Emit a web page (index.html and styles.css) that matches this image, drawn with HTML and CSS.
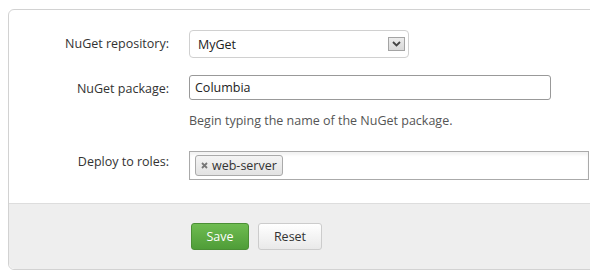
FILE: index.html
```html
<!DOCTYPE html>
<html lang="en">
<head>
  <meta charset="UTF-8" />
  <title>NuGet step</title>
  <link rel="stylesheet" href="styles.css">
</head>
<body>
  <div class="card">
    <div class="fields">
      <label class="label">NuGet repository:</label>
      <div class="select">
        <span class="select-value">MyGet</span>
        <span class="select-arrow">
          <svg width="9" height="6" viewBox="0 0 9 6"><path d="M1 1 L4.5 4.5 L8 1" fill="none" stroke="#444" stroke-width="1.8"/></svg>
        </span>
      </div>

      <label class="label">NuGet package:</label>
      <div class="control">
        <input class="text" type="text" value="Columbia">
        <div class="help">Begin typing the name of the NuGet package.</div>
      </div>

      <label class="label label-roles">Deploy to roles:</label>
      <div class="tags">
        <span class="tag">
          <svg width="7" height="7" viewBox="0 0 7 7"><path d="M1 1 L6 6 M6 1 L1 6" stroke="#777" stroke-width="1.8"/></svg>
          web-server
        </span>
      </div>
    </div>
    <div class="footer">
      <button class="btn btn-save">Save</button>
      <button class="btn btn-reset">Reset</button>
    </div>
  </div>
</body>
</html>
```

FILE: styles.css
```css
body {
  margin: 0;
  padding: 9px 0 0 8px;
  overflow: hidden;
  background: #fff;
  font-family: 'Open Sans', sans-serif;
  font-size: 12.5px;
  color: #333;
}
.card {
  width: 600px;
  border: 1px solid #d2d2d2;
  border-radius: 6px;
  background: #fff;
}
.fields {
  display: grid;
  grid-template-columns: 160px auto;
  column-gap: 20px;
  row-gap: 17px;
  padding: 20px 0 23px;
  align-items: start;
}
.label {
  text-align: right;
  line-height: 28px;
  color: #333;
}
.label-roles {
  line-height: 22px;
}
.select {
  width: 220px;
  height: 28px;
  box-sizing: border-box;
  border: 1px solid #d0d0d0;
  border-radius: 4px;
  display: flex;
  align-items: center;
  justify-content: space-between;
  padding: 0 3px 0 8px;
  color: #222;
}
.select-arrow {
  width: 15px;
  height: 12px;
  border: 1px solid #a4a4a4;
  background: linear-gradient(#ececec, #d9d9d9);
  display: flex;
  align-items: center;
  justify-content: center;
}
.control {
  display: flex;
  flex-direction: column;
}
.text {
  width: 362px;
  height: 25px;
  box-sizing: border-box;
  border: 1px solid #999;
  border-radius: 3px;
  padding: 0 5px;
  font-family: inherit;
  font-size: 12.5px;
  color: #222;
}
.help {
  margin-top: 12px;
  margin-bottom: 5px;
  color: #555;
  line-height: 17px;
}
.tags {
  width: 400px;
  height: 29px;
  box-sizing: border-box;
  border: 1px solid #aaa;
  box-shadow: inset 0 3px 3px rgba(0,0,0,0.05);
  padding: 3px 5px;
}
.tag {
  display: inline-flex;
  align-items: center;
  gap: 4px;
  height: 21px;
  box-sizing: border-box;
  padding: 0 5px;
  border: 1px solid #aaa;
  border-radius: 3px;
  background: linear-gradient(#f4f4f4, #e2e2e2);
  color: #333;
}
.footer {
  background: #eee;
  border-top: 1px solid #ddd;
  border-radius: 0 0 6px 6px;
  padding: 19px 0 19px 182px;
  display: flex;
  gap: 9px;
}
.btn {
  height: 27px;
  border-radius: 3px;
  font-family: 'Open Sans', sans-serif;
  font-size: 12.5px;
  cursor: pointer;
}
.btn-save {
  width: 58px;
  border: 1px solid #4b8f35;
  background: linear-gradient(#6fbc51, #4f9d38);
  color: #fff;
}
.btn-reset {
  width: 64px;
  border: 1px solid #ccc;
  background: linear-gradient(#fff, #e9e9e9);
  color: #333;
}
```
